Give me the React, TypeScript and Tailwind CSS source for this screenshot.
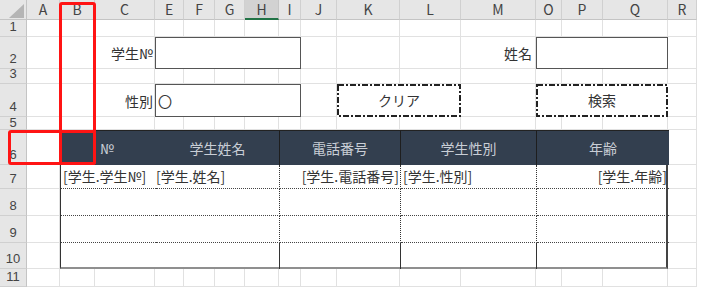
const COLS = ['A', 'B', 'C', 'E', 'F', 'G', 'H', 'I', 'J', 'K', 'L', 'M', 'O', 'P', 'Q', 'R']
const ROWS = ['1', '2', '3', '4', '5', '6', '7', '8', '9', '10', '11']

const jp = "font-['Noto_Sans_CJK_JP',sans-serif]"

function DashBox({ w, h, label, className }: { w: number; h: number; label: string; className: string }) {
  return (
    <div className={`relative flex items-center justify-center text-[14px] text-[#333] ${className}`}>
      <svg width={w} height={h} className="absolute left-0 top-0">
        <rect
          x="1"
          y="1"
          width={w - 2}
          height={h - 2}
          fill="none"
          stroke="#222"
          strokeWidth="2"
          strokeDasharray="6 2 2 2"
        />
      </svg>
      {label}
    </div>
  )
}

function DataRow({ last }: { last?: boolean }) {
  const line = last ? '' : 'border-b border-dotted border-b-[#444]'
  return (
    <>
      <div className={`col-span-2 ${line}`}></div>
      <div className={`border-r border-r-[#333] ${line}`}></div>
      <div className={`border-r border-r-[#333] ${line}`}></div>
      <div className={`border-r border-r-[#333] ${line}`}></div>
      <div className={`${line}`}></div>
    </>
  )
}

export default function App() {
  return (
    <div className={`relative w-[703px] h-[287px] overflow-hidden bg-white ${jp}`}>
      <div className="grid grid-cols-[27px_33px_35px_60px_29px_31px_30px_34px_22px_36px_63px_61px_75px_26px_41px_65px_29px_1fr] grid-rows-[20px_17px_32px_15px_33px_13px_35px_24px_27px_27px_26px_18px]">

        {/* corner */}
        <div className="col-start-1 row-start-1 bg-[#e6e6e6] border-r border-b border-[#c4c4c4] relative">
          <svg width="27" height="20" className="absolute left-0 top-0">
            <polygon points="24,4 24,18 9,18" fill="#b5b5b5" />
          </svg>
        </div>

        {/* column headers */}
        {COLS.map((c, i) => (
          <div
            key={c}
            style={{ gridColumn: i + 2, gridRow: 1 }}
            className={
              c === 'H'
                ? 'flex items-center justify-center bg-[#d2d2d2] border-r border-[#c6c6c6] border-b-2 border-b-[#217346] text-[14px] text-[#444]'
                : 'flex items-center justify-center bg-[#e6e6e6] border-r border-[#d0d0d0] border-b border-b-[#c4c4c4] text-[14px] text-[#444]'
            }
          >
            {c}
          </div>
        ))}

        {/* row headers */}
        {ROWS.map((r, i) => (
          <div
            key={r}
            style={{ gridColumn: 1, gridRow: i + 2 }}
            className={`flex items-end justify-center ${r === '5' ? 'pb-0' : 'pb-[3px]'} bg-[#e6e6e6] border-r border-r-[#c4c4c4] border-b border-b-[#d0d0d0] font-['Liberation_Sans',sans-serif] text-[13px] leading-[12px] text-[#444]`}
          >
            {r}
          </div>
        ))}

        {/* gridlines */}
        {ROWS.map((r, i) =>
          COLS.map((c, j) => (
            <div
              key={r + c}
              style={{ gridColumn: j + 2, gridRow: i + 2 }}
              className="border-r border-b border-[#e1e1e1]"
            />
          ))
        )}

        {/* form */}
        <div className="col-start-4 row-start-3 flex items-center justify-end pr-0.5 text-[14px] text-[#333]">学生№</div>
        <div className="col-start-5 col-end-10 row-start-3 bg-white border border-[#555]"></div>

        <div className="col-start-13 row-start-3 flex items-center justify-end pr-1 text-[14px] text-[#333]">姓名</div>
        <div className="col-start-14 col-end-17 row-start-3 bg-white border border-[#555]"></div>

        <div className="col-start-4 row-start-5 flex items-center justify-end pr-0.5 pt-0.5 text-[14px] text-[#333]">性別</div>
        <div className="col-start-5 col-end-10 row-start-5 flex items-center pl-0.5 pt-0.5 bg-white border border-[#555] text-[14px] text-[#333]">〇</div>

        <DashBox w={124} h={33} label="クリア" className="col-start-11 col-end-13 row-start-5 bg-white" />
        <DashBox w={132} h={33} label="検索" className="col-start-14 col-end-17 row-start-5 bg-white" />

        {/* table */}
        <div className="col-start-3 col-end-17 row-start-7 row-end-12 grid grid-cols-[35px_60px_124px_121px_136px_132px] grid-rows-[35px_24px_27px_27px_26px] bg-white border-l border-l-[#333] border-r-2 border-r-[#444] border-b-2 border-b-[#8f8f8f] text-[14px]">
          <div className="bg-[#333f4f] border-t border-t-[#222]"></div>
          <div className="bg-[#333f4f] border-t border-t-[#222] flex items-center pl-1 text-[#c9ced6]">№</div>
          <div className="bg-[#333f4f] border-t border-t-[#222] border-r border-r-[#1e1e1e] flex items-center justify-center text-[#c9ced6]">学生姓名</div>
          <div className="bg-[#333f4f] border-t border-t-[#222] border-r border-r-[#1e1e1e] flex items-center justify-center text-[#c9ced6]">電話番号</div>
          <div className="bg-[#333f4f] border-t border-t-[#222] border-r border-r-[#1e1e1e] flex items-center justify-center text-[#c9ced6]">学生性別</div>
          <div className="bg-[#333f4f] border-t border-t-[#222] flex items-center justify-center text-[#c9ced6]">年齢</div>

          <div className="col-span-2 flex items-center pl-0.5 border-b border-dotted border-b-[#444] text-[#333] whitespace-nowrap">[学生.学生№]</div>
          <div className="flex items-center border-r border-r-[#333] border-b border-dotted border-b-[#444] text-[#333] whitespace-nowrap">[学生.姓名]</div>
          <div className="flex items-center justify-end pr-px border-r border-r-[#333] border-b border-dotted border-b-[#444] text-[#333] whitespace-nowrap">[学生.電話番号]</div>
          <div className="flex items-center pl-0.5 border-r border-r-[#333] border-b border-dotted border-b-[#444] text-[#333] whitespace-nowrap">[学生.性別]</div>
          <div className="flex items-center justify-end pr-0.5 border-b border-dotted border-b-[#444] text-[#333] whitespace-nowrap">[学生.年齢]</div>

          <DataRow />
          <DataRow />
          <DataRow last />
        </div>
      </div>

      {/* red highlights */}
      <div className="absolute left-[59px] top-[2px] w-[37px] h-[163px] border-[3px] border-[#ff1414] rounded-[3px]"></div>
      <div className="absolute left-[8px] top-[130px] w-[88px] h-[35px] border-[3px] border-[#ff1414] rounded-[3px]"></div>
    </div>
  )
}
